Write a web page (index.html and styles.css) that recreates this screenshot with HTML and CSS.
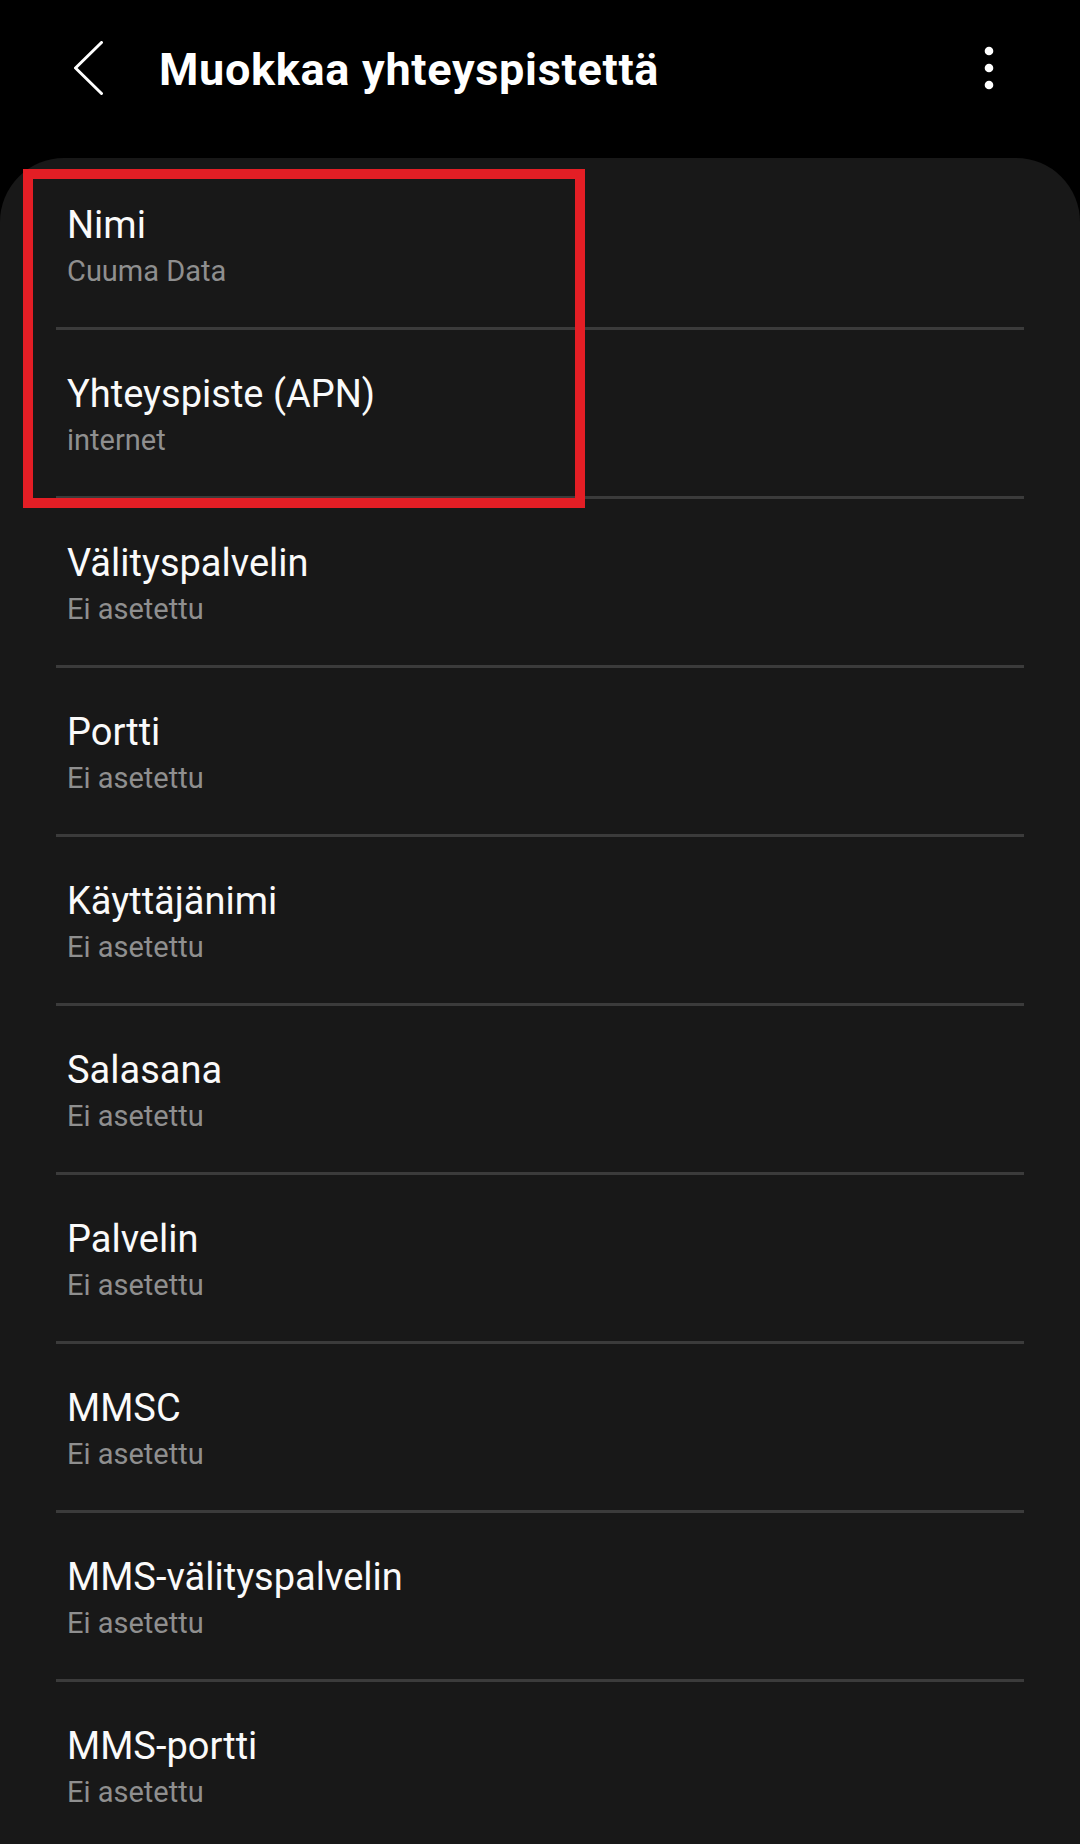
FILE: index.html
```html
<!DOCTYPE html>
<html lang="fi">
<head>
<meta charset="utf-8">
<title>Muokkaa yhteyspistettä</title>
<link rel="stylesheet" href="styles.css">
</head>
<body>
<div class="screen">
  <header class="appbar">
    <button class="back" aria-label="Takaisin">
      <svg width="30" height="54" viewBox="0 0 30 54"><polyline points="27.5,1.5 1.5,27 27.5,52.5" fill="none" stroke="#fff" stroke-width="3" stroke-linecap="round" stroke-linejoin="round"/></svg>
    </button>
    <h1 class="title">Muokkaa yhteyspistettä</h1>
    <button class="more" aria-label="Lisää">
      <svg width="10" height="44" viewBox="0 0 10 44"><circle cx="5" cy="5" r="4.3" fill="#fff"/><circle cx="5" cy="22" r="4.3" fill="#fff"/><circle cx="5" cy="39" r="4.3" fill="#fff"/></svg>
    </button>
  </header>
  <main class="card">
    <div class="highlight"></div>
    <ul class="list">
      <li class="item"><div class="label">Nimi</div><div class="value">Cuuma Data</div></li>
      <li class="item"><div class="label">Yhteyspiste (APN)</div><div class="value">internet</div></li>
      <li class="item"><div class="label">Välityspalvelin</div><div class="value">Ei asetettu</div></li>
      <li class="item"><div class="label">Portti</div><div class="value">Ei asetettu</div></li>
      <li class="item"><div class="label">Käyttäjänimi</div><div class="value">Ei asetettu</div></li>
      <li class="item"><div class="label">Salasana</div><div class="value">Ei asetettu</div></li>
      <li class="item"><div class="label">Palvelin</div><div class="value">Ei asetettu</div></li>
      <li class="item"><div class="label">MMSC</div><div class="value">Ei asetettu</div></li>
      <li class="item"><div class="label">MMS-välityspalvelin</div><div class="value">Ei asetettu</div></li>
      <li class="item"><div class="label">MMS-portti</div><div class="value">Ei asetettu</div></li>
    </ul>
  </main>
</div>
</body>
</html>
```
FILE: styles.css
```css
* { box-sizing: border-box; }
html, body {
  margin: 0;
  padding: 0;
  background: #000;
  height: 1844px;
  overflow: hidden;
}
body {
  font-family: Roboto, "Noto Sans", "Liberation Sans", sans-serif;
  color: #fafafa;
}
.screen {
  width: 1080px;
  height: 1844px;
  display: flex;
  flex-direction: column;
}
.appbar {
  height: 136px;
  flex: 0 0 auto;
  display: flex;
  align-items: center;
  padding: 0 86px 0 74px;
}
.back, .more {
  background: none;
  border: 0;
  padding: 0;
  margin: 0;
  display: flex;
}
.title {
  margin: 0 0 0 55px;
  padding-top: 3px;
  font-size: 45px;
  line-height: 54px;
  font-weight: 700;
  letter-spacing: 0.7px;
  color: #fff;
}
.more {
  margin-left: auto;
}
.card {
  position: relative;
  margin-top: 22px;
  flex: 1 1 auto;
  background: #181818;
  border-radius: 64px 64px 0 0;
  padding-top: 3px;
}
.highlight {
  position: absolute;
  left: 23px;
  top: 11px;
  width: 562px;
  height: 339px;
  border: 10px solid #e31e25;
  pointer-events: none;
}
.list {
  list-style: none;
  margin: 0 56px;
  padding: 0;
}
.item {
  padding: 41px 0 39px 11px;
  border-bottom: 3px solid #3b3b3b;
}
.label {
  font-size: 38px;
  line-height: 46px;
  color: #fafafa;
}
.value {
  margin-top: 6px;
  font-size: 29px;
  line-height: 34px;
  color: #8f8f8f;
}
```
